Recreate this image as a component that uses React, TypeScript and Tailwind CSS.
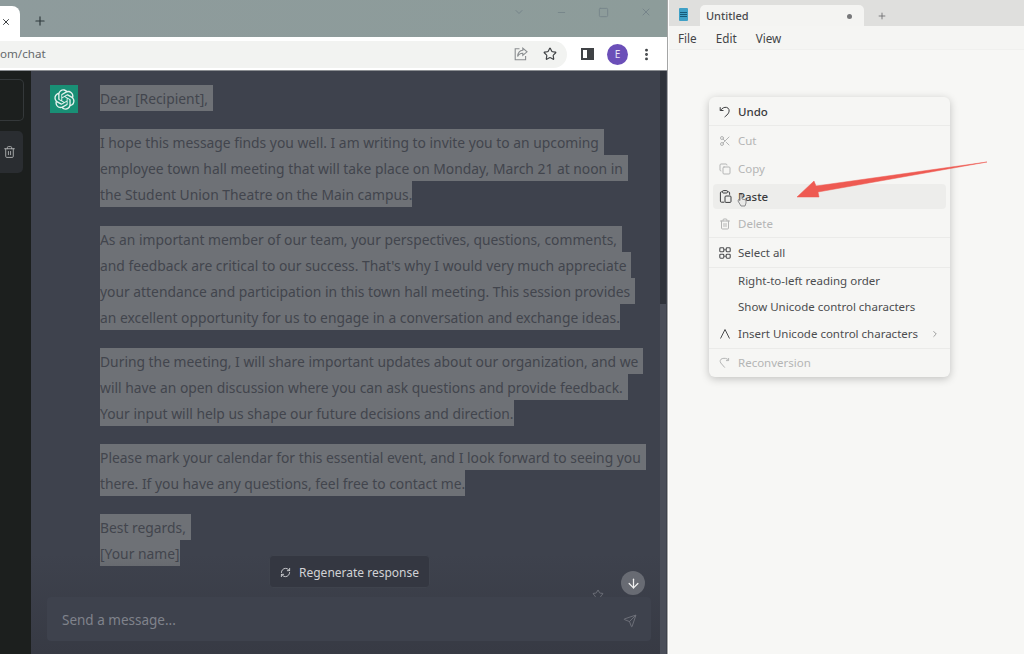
import {
  ArrowDown,
  ChevronDown,
  ChevronRight,
  Copy,
  EllipsisVertical,
  Minus,
  Plus,
  RefreshCw,
  Scissors,
  Send,
  Square,
  Star,
  Trash2,
  X,
} from "lucide-react";

const paragraphs = [
  ["Dear [Recipient],"],
  [
    "I hope this message finds you well. I am writing to invite you to an upcoming",
    "employee town hall meeting that will take place on Monday, March 21 at noon in",
    "the Student Union Theatre on the Main campus.",
  ],
  [
    "As an important member of our team, your perspectives, questions, comments,",
    "and feedback are critical to our success. That's why I would very much appreciate",
    "your attendance and participation in this town hall meeting. This session provides",
    "an excellent opportunity for us to engage in a conversation and exchange ideas.",
  ],
  [
    "During the meeting, I will share important updates about our organization, and we",
    "will have an open discussion where you can ask questions and provide feedback.",
    "Your input will help us shape our future decisions and direction.",
  ],
  [
    "Please mark your calendar for this essential event, and I look forward to seeing you",
    "there. If you have any questions, feel free to contact me.",
  ],
  ["Best regards,", "[Your name]"],
];

function OpenAiLogo() {
  return (
    <svg viewBox="0 0 41 41" className="h-[21px] w-[21px]" fill="#e6f2ee">
      <path d="M37.5324 16.8707C37.9808 15.5241 38.1363 14.0974 37.9886 12.6859C37.8409 11.2744 37.3934 9.91076 36.676 8.68622C35.6126 6.83404 33.9882 5.3676 32.0373 4.4985C30.0864 3.62941 27.9098 3.40259 25.8215 3.85078C24.8796 2.7893 23.7219 1.94125 22.4257 1.36341C21.1295 0.785575 19.7249 0.491269 18.3058 0.500197C16.1708 0.495044 14.0893 1.16803 12.3614 2.42214C10.6335 3.67624 9.34853 5.44666 8.6917 7.47815C7.30085 7.76286 5.98686 8.3414 4.8377 9.17505C3.68854 10.0087 2.73073 11.0782 2.02839 12.312C0.956464 14.1591 0.498905 16.2988 0.721698 18.4228C0.944492 20.5467 1.83612 22.5449 3.268 24.1293C2.81966 25.4759 2.66413 26.9026 2.81182 28.3141C2.95951 29.7256 3.40701 31.0892 4.12437 32.3138C5.18791 34.1659 6.8123 35.6322 8.76321 36.5013C10.7141 37.3704 12.8907 37.5973 14.9789 37.1492C15.9208 38.2107 17.0786 39.0587 18.3747 39.6366C19.6709 40.2144 21.0755 40.5087 22.4946 40.4998C24.6307 40.5054 26.7133 39.8321 28.4418 38.5772C30.1704 37.3223 31.4556 35.5506 32.1119 33.5179C33.5027 33.2332 34.8167 32.6547 35.9659 31.821C37.115 30.9874 38.0728 29.9178 38.7752 28.684C39.8458 26.8371 40.3023 24.6979 40.0789 22.5748C39.8556 20.4517 38.9639 18.4544 37.5324 16.8707ZM22.4978 37.8849C20.7443 37.8874 19.0459 37.2733 17.6994 36.1501C17.7601 36.117 17.8666 36.0586 17.936 36.0161L25.9004 31.4156C26.1003 31.3019 26.2663 31.137 26.3813 30.9378C26.4964 30.7386 26.5563 30.5124 26.5549 30.2825V19.0542L29.9213 20.998C29.9389 21.0068 29.9541 21.0198 29.9656 21.0359C29.977 21.052 29.9842 21.0707 29.9867 21.0902V30.3889C29.9842 32.375 29.1946 34.2791 27.7909 35.6841C26.3872 37.0892 24.4838 37.8806 22.4978 37.8849ZM6.39227 31.0064C5.51397 29.4888 5.19742 27.7107 5.49804 25.9832C5.55718 26.0187 5.66048 26.0818 5.73461 26.1244L13.699 30.7248C13.8975 30.8408 14.1233 30.902 14.3532 30.902C14.583 30.902 14.8088 30.8408 15.0073 30.7248L24.731 25.1103V28.9979C24.7321 29.0177 24.7283 29.0376 24.7199 29.0556C24.7115 29.0736 24.6988 29.0893 24.6829 29.1012L16.6317 33.7497C14.9096 34.7416 12.8643 35.0097 10.9447 34.4954C9.02506 33.9811 7.38785 32.7263 6.39227 31.0064ZM4.29707 13.6194C5.17156 12.0998 6.55279 10.9364 8.19885 10.3327C8.19885 10.4013 8.19491 10.5228 8.19491 10.6071V19.808C8.19351 20.0378 8.25334 20.2638 8.36823 20.4629C8.48312 20.6619 8.64893 20.8267 8.84863 20.9404L18.5723 26.5542L15.206 28.4979C15.1894 28.5089 15.1703 28.5155 15.1505 28.5173C15.1307 28.5191 15.1107 28.516 15.0924 28.5082L7.04046 23.8557C5.32135 22.8601 4.06716 21.2235 3.55289 19.3046C3.03862 17.3858 3.30624 15.3413 4.29707 13.6194ZM31.955 20.0556L22.2312 14.4411L25.5976 12.4981C25.6142 12.4872 25.6333 12.4805 25.6531 12.4787C25.6729 12.4769 25.6928 12.4801 25.7111 12.4879L33.7631 17.1364C34.9967 17.849 36.0017 18.8982 36.6606 20.1613C37.3194 21.4244 37.6047 22.849 37.4832 24.2684C37.3617 25.6878 36.8382 27.0432 35.9743 28.1759C35.1103 29.3086 33.9415 30.1717 32.6047 30.6641C32.6047 30.5947 32.6047 30.4733 32.6047 30.3889V21.188C32.6066 20.9586 32.5474 20.7328 32.4332 20.5338C32.319 20.3348 32.154 20.1698 31.955 20.0556ZM35.3055 15.0128C35.2464 14.9765 35.1431 14.9142 35.069 14.8717L27.1045 10.2712C26.906 10.1554 26.6803 10.0943 26.4504 10.0943C26.2206 10.0943 25.9948 10.1554 25.7963 10.2712L16.0726 15.8858V11.9982C16.0715 11.9783 16.0753 11.9585 16.0837 11.9405C16.0921 11.9225 16.1048 11.9068 16.1207 11.8949L24.1719 7.25025C25.4053 6.53903 26.8158 6.19376 28.2383 6.25482C29.6608 6.31589 31.0364 6.78077 32.2044 7.59508C33.3723 8.40939 34.2842 9.53945 34.8334 10.8531C35.3826 12.1667 35.5464 13.6095 35.3055 15.0128ZM14.2424 21.9419L10.8752 19.9981C10.8576 19.9893 10.8423 19.9763 10.8309 19.9602C10.8195 19.9441 10.8122 19.9254 10.8098 19.9058V10.6071C10.8107 9.18295 11.2173 7.78848 11.9819 6.58696C12.7466 5.38544 13.8377 4.42659 15.1275 3.82264C16.4173 3.21869 17.8524 2.99464 19.2649 3.1767C20.6775 3.35876 22.0089 3.93941 23.1034 4.85067C23.0427 4.88379 22.937 4.94215 22.8668 4.98473L14.9024 9.58517C14.7025 9.69878 14.5366 9.86356 14.4215 10.0626C14.3065 10.2616 14.2466 10.4877 14.2479 10.7175L14.2424 21.9419ZM16.071 17.9991L20.4018 15.4978L24.7325 17.9975V22.9985L20.4018 25.4983L16.071 22.9985V17.9991Z" />
    </svg>
  );
}

function UndoIcon() {
  return (
    <svg viewBox="0 0 12 12" className="h-[12px] w-[12px]" fill="none" stroke="currentColor" strokeWidth="1">
      <path d="M1.2 1.2v3.3h3.3M1.4 4.4 C3 2.2 5.4 0.9 7.6 1.4 C10 2 10.8 4.6 9.6 6.8 C8.8 8.4 7.4 9.6 5.6 11" />
    </svg>
  );
}

function PasteIcon() {
  return (
    <svg viewBox="0 0 13 13" className="h-[13px] w-[13px]" fill="none" stroke="currentColor" strokeWidth="1">
      <path d="M3.5 1.8H2.4a1 1 0 0 0-1 1v8.4a1 1 0 0 0 1 1h3M8.5 1.8h1.1a1 1 0 0 1 1 1v2" />
      <rect x="3.6" y="0.6" width="4.8" height="2.4" rx="0.7" />
      <rect x="6" y="6" width="6" height="6.4" rx="1" />
    </svg>
  );
}

function SelectAllIcon() {
  return (
    <svg viewBox="0 0 12 12" className="h-[12px] w-[12px]" fill="none" stroke="currentColor" strokeWidth="1.1">
      <rect x="0.8" y="0.8" width="4" height="4" rx="0.9" />
      <rect x="7.2" y="0.8" width="4" height="4" rx="0.9" />
      <rect x="0.8" y="7.2" width="4" height="4" rx="0.9" />
      <rect x="7.2" y="7.2" width="4" height="4" rx="0.9" />
      <path d="M5.2 2.8h1.6M5.2 9.2h1.6" />
    </svg>
  );
}

function InsertIcon() {
  return (
    <svg viewBox="0 0 12 12" className="h-[12px] w-[12px]" fill="none" stroke="currentColor" strokeWidth="1">
      <path d="M1.5 10.5 6 1.5l4.5 9" />
    </svg>
  );
}

function ReconversionIcon() {
  return (
    <svg viewBox="0 0 12 12" className="h-[12px] w-[12px]" fill="none" stroke="currentColor" strokeWidth="1">
      <path d="M9.5 3.2C8 1.2 5.5 1 3.2 1.6 1.2 2.2 0.6 4.2 1.8 6l4 4.6M9.6 1v2.6H7" />
    </svg>
  );
}

function ShareIcon() {
  return (
    <svg viewBox="0 0 14 14" className="h-[14px] w-[14px]" fill="none" stroke="currentColor" strokeWidth="1.1">
      <path d="M5.5 1.8H1.2v11h10.4V9" />
      <path d="M8.8 1.2 13 4.8 8.8 8.4V6.3C6.2 6.2 4.6 7.4 3.6 9.6 3.8 6.2 5.6 3.6 8.8 3.3z" />
    </svg>
  );
}

function MenuRow({
  icon,
  label,
  h,
  muted,
  hover,
  line,
  chevron,
  strong,
}: {
  icon?: React.ReactNode;
  label: string;
  h: string;
  muted?: boolean;
  hover?: boolean;
  line?: boolean;
  chevron?: boolean;
  strong?: boolean;
}) {
  return (
    <div className={`${h} ${line ? "border-b border-[#ebebe9]" : ""} flex items-center`}>
      <div
        className={`mx-[4px] flex h-[25px] flex-1 items-center rounded-[4px] px-[6px] ${
          hover ? "bg-[#ededeb]" : ""
        } ${muted ? "text-[#b4b5b5]" : strong ? "text-[#3b3c3e]" : "text-[#4c4d4f]"}`}
      >
        <span className="flex w-[19px] shrink-0 items-center">{icon}</span>
        <span className={`flex-1 whitespace-nowrap pt-[1px] text-[11.5px] leading-none ${strong ? "font-medium" : ""}`}>
          {label}
        </span>
        {chevron && <ChevronRight className="h-[10px] w-[10px] text-[#8a8b8c]" />}
      </div>
    </div>
  );
}

function ChatPane() {
  return (
    <div className="relative flex min-h-0 flex-1 overflow-hidden bg-[#3e424d]">
      <div className="flex w-[31px] shrink-0 flex-col gap-[10px] bg-[#1c1f1e] pt-[8px]">
        <div className="h-[42px] w-[24px] rounded-r-[5px] border-y border-r border-[#34383a]" />
        <div className="flex h-[42px] w-[23px] items-center justify-end rounded-r-[5px] bg-[#2a2d31] pr-[7px]">
          <Trash2 className="h-[14px] w-[13px] text-[#aeb0b2]" strokeWidth={1.7} />
        </div>
      </div>
      <div className="flex flex-1 pl-[19px] pt-[14px]">
        <div className="flex h-[28px] w-[28px] shrink-0 items-center justify-center bg-[#10a37f]/80">
          <OpenAiLogo />
        </div>
        <div className="ml-[22px] flex flex-col gap-[18.3px]">
          {paragraphs.map((lines, i) => (
            <div key={i}>
              {lines.map((line, j) => (
                <div
                  key={line}
                  className={`h-[26px] w-fit whitespace-nowrap bg-[#6e7176] text-[13.85px] leading-[27px] text-[#42454d] ${
                    j < lines.length - 1 || i === 0 ? "pr-[5px]" : ""
                  }`}
                >
                  {line}
                </div>
              ))}
            </div>
          ))}
        </div>
      </div>
      <div className="absolute right-[1px] top-0 flex h-full w-[6px] flex-col bg-[#4a4e59]">
        <div className="h-[233px] bg-[#2f333b]" />
      </div>
      <div className="absolute bottom-0 left-[31px] right-[7px] h-[100px] bg-gradient-to-t from-[#373a44] to-[#3e424d]/0" />
      <Star className="absolute left-[591px] top-[518px] h-[12px] w-[14px] text-[#7b7e86]" strokeWidth={1.5} />
      <div className="absolute left-[621px] top-[500px] flex h-[24px] w-[24px] items-center justify-center rounded-full bg-[#686b73]">
        <ArrowDown className="h-[15px] w-[15px] text-[#f0f0f0]" strokeWidth={2} />
      </div>
      <div className="absolute left-[269px] top-[484px] flex h-[33px] w-[161px] items-center gap-[8px] whitespace-nowrap rounded-[4px] border border-[#3f434d] bg-[#343741] pl-[10px] pt-[2px] text-[12px] text-[#d1d2d5]">
        <RefreshCw className="h-[11px] w-[11px]" strokeWidth={2} />
        <span>Regenerate response</span>
      </div>
      <div className="absolute bottom-[13px] left-[47px] flex h-[44px] w-[604px] items-center justify-between rounded-[4px] bg-[#3e424d] pl-[15px] pr-[14px] pt-[3px]">
        <span className="text-[13.5px] text-[#80838c]">Send a message...</span>
        <Send className="h-[14px] w-[14px] text-[#72757e]" strokeWidth={1.5} />
      </div>
    </div>
  );
}

export default function App() {
  return (
    <div className="relative flex h-[654px] w-[1024px] overflow-hidden font-['Noto_Sans',sans-serif]">
      <div className="flex w-[667px] shrink-0 flex-col">
        <div className="flex h-[37px] items-start bg-gradient-to-r from-[#8e9b9c] to-[#8d9c9a]">
          <div className="mt-[6px] flex h-[31px] w-[20px] items-center rounded-tr-[8px] bg-white pl-[1px] pt-[1px]">
            <X className="h-[10px] w-[10px] text-[#3c4043]" strokeWidth={2.4} />
          </div>
          <Plus className="ml-[13px] mt-[14px] h-[14px] w-[14px] text-[#2f3a3c]" strokeWidth={2} />
          <div className="ml-auto mt-[6px] flex items-center gap-[31px] pr-[15px] text-[#76848a]">
            <ChevronDown className="h-[12px] w-[12px]" />
            <Minus className="h-[11px] w-[11px]" />
            <Square className="h-[11px] w-[11px]" />
            <X className="h-[12px] w-[12px]" />
          </div>
        </div>
        <div className="flex h-[34px] items-center bg-white shadow-[inset_0_-1px_0_#8b8e92]">
          <div className="flex h-[27px] w-[567px] items-center justify-between rounded-r-[14px] bg-[#f2f3f1] pr-[10px]">
            <span className="text-[11.6px] text-[#66696c]">om/chat</span>
            <div className="flex items-center gap-[15px]">
              <span className="text-[#8a8d90]">
                <ShareIcon />
              </span>
              <Star className="h-[14px] w-[14px] text-[#3f4245]" strokeWidth={2} />
            </div>
          </div>
          <div className="ml-[14px] h-[12px] w-[13px] border-2 border-[#3f4245] bg-[linear-gradient(90deg,#fff_50%,#3f4245_50%)]" />
          <div className="ml-[13px] flex h-[21px] w-[21px] items-center justify-center rounded-full bg-[#6b4fb8] text-[10px] text-[#e9e4f5]">
            E
          </div>
          <EllipsisVertical className="ml-[11px] h-[15px] w-[15px] text-[#3f4245]" strokeWidth={2.6} />
        </div>
        <ChatPane />
      </div>
      <div className="w-[2px] bg-[linear-gradient(90deg,#a5a6a6_40%,#fdfdfd_40%)]" />
      <div className="flex flex-1 flex-col bg-[#f5f5f3]">
        <div className="flex h-[26px] items-end bg-[#dfdfdd]">
          <div className="mb-[5px] ml-[10px] flex h-[13px] w-[9px] flex-col justify-center gap-[1px] rounded-[1px] bg-[#3fa0c6] px-[1px]">
            <span className="h-[1px] bg-[#175a78]" />
            <span className="h-[1px] bg-[#175a78]" />
            <span className="h-[1px] bg-[#175a78]" />
          </div>
          <div className="ml-[12px] flex h-[21px] w-[164px] items-center justify-between rounded-t-[5px] bg-[#f4f4f2] pl-[6px] pr-[12px] pt-[1px]">
            <span className="text-[11px] font-medium text-[#4a4b4d]">Untitled</span>
            <span className="h-[5px] w-[5px] rounded-full bg-[#77787a]" />
          </div>
          <Plus className="mb-[5px] ml-[13px] h-[10px] w-[10px] text-[#6a6b6d]" />
        </div>
        <div className="flex h-[24px] items-center gap-[19px] border-b border-[#f0f0ee] pl-[9px] pt-[3px] text-[11.7px] text-[#434446]">
          <span>File</span>
          <span>Edit</span>
          <span>View</span>
        </div>
        <div className="flex-1 bg-[#f7f7f5] pl-[40px] pt-[47px]">
          <div className="h-[280px] w-[241px] rounded-[6px] bg-[#f6f6f4] pt-[1px] shadow-[0_2px_8px_rgba(0,0,0,0.22)]">
            <MenuRow h="h-[28px]" strong line label="Undo" icon={<UndoIcon />} />
            <MenuRow h="h-[29px]" muted label="Cut" icon={<Scissors className="h-[12px] w-[12px]" />} />
            <MenuRow h="h-[27px]" muted label="Copy" icon={<Copy className="h-[12px] w-[12px]" />} />
            <MenuRow h="h-[28px]" strong hover label="Paste" icon={<PasteIcon />} />
            <MenuRow h="h-[28px]" muted line label="Delete" icon={<Trash2 className="h-[12px] w-[12px]" />} />
            <MenuRow h="h-[30px]" line label="Select all" icon={<SelectAllIcon />} />
            <MenuRow h="h-[25px]" label="Right-to-left reading order" />
            <MenuRow h="h-[26px]" label="Show Unicode control characters" />
            <MenuRow h="h-[30px]" line chevron label="Insert Unicode control characters" icon={<InsertIcon />} />
            <MenuRow h="h-[27px]" muted label="Reconversion" icon={<ReconversionIcon />} />
          </div>
        </div>
      </div>
      <svg className="absolute left-[790px] top-[155px] h-[50px] w-[200px]" viewBox="0 0 200 50">
        <path d="M197 7 L28 37 L29 42 L7 42 L24 26 L26 31 Z" fill="#ee5a52" stroke="#ee5a52" strokeWidth="0.5" />
      </svg>
      <svg className="absolute left-[737px] top-[193px] h-[14px] w-[10px]" viewBox="0 0 10 14" fill="none" stroke="#8a8b8d">
        <path d="M3 1.5v6L1.5 6.5 1 8l3 5h4l1-3V7L5 6V1.5z" fill="#e9e9e7" />
      </svg>
    </div>
  );
}
